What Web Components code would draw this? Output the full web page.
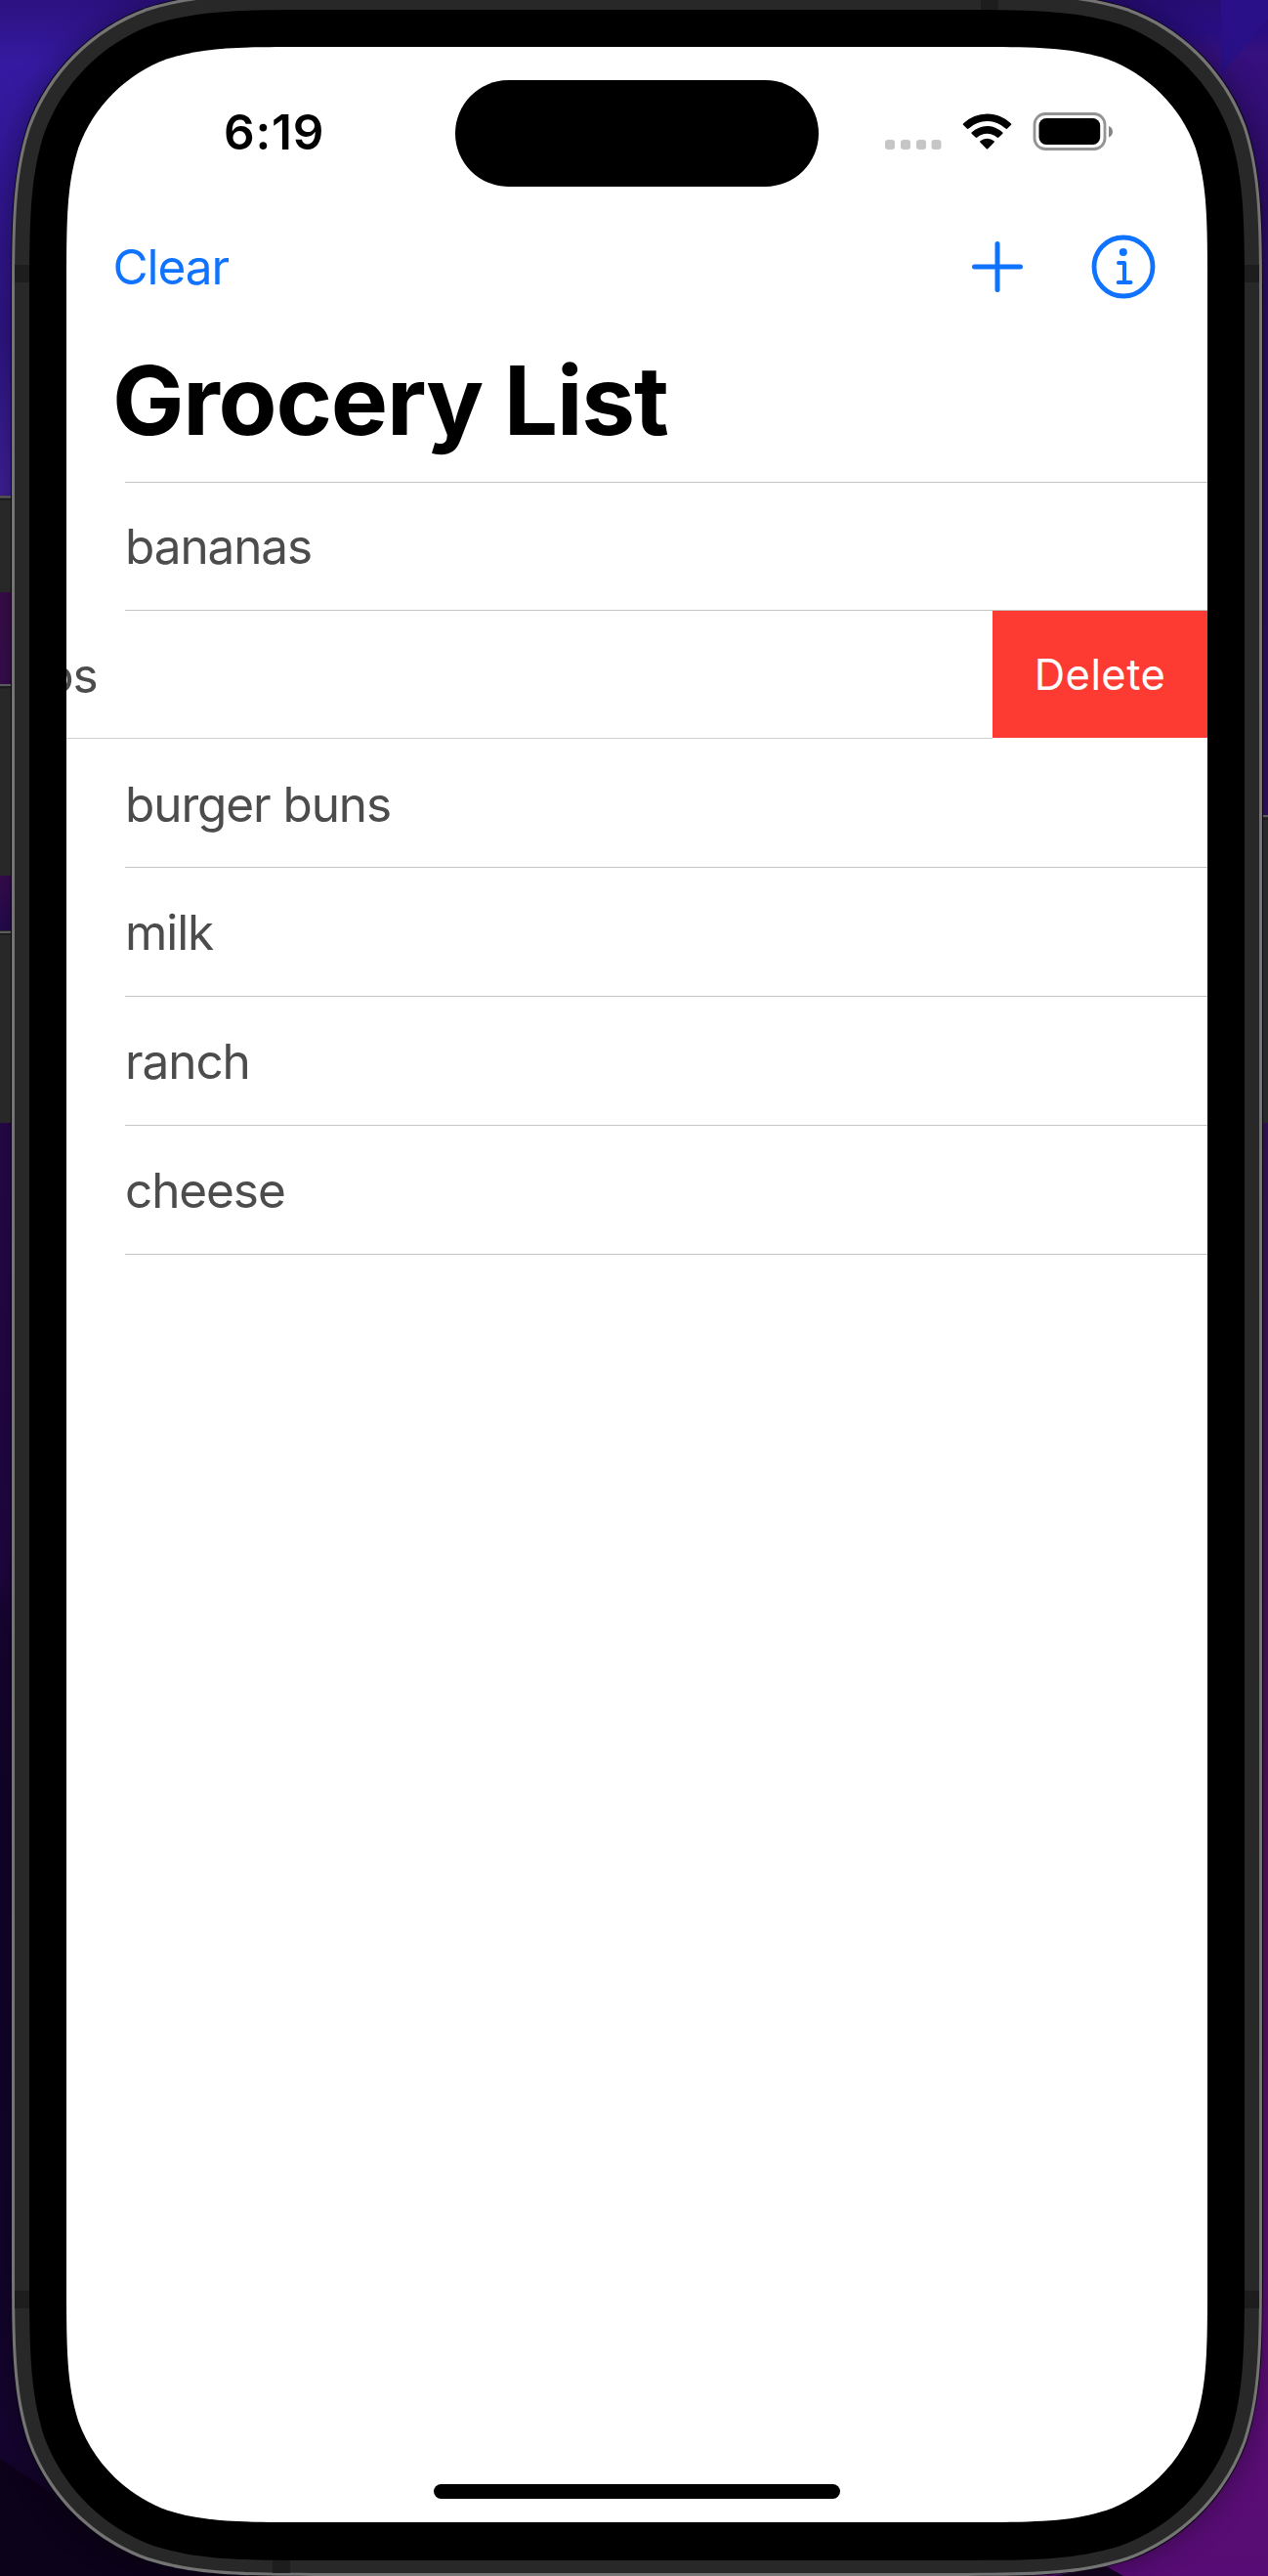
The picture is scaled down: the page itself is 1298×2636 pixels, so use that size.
<!DOCTYPE html>
<html lang="en">
<head>
<meta charset="utf-8">
<title>Grocery List</title>
<style>
html,body{margin:0;padding:0;width:1298px;height:2636px;overflow:hidden;background:#1c0745}
body{font-family:Inter,"Liberation Sans",sans-serif}
</style>
</head>
<body>
<phone-stage>
  <status-bar time="6:19"></status-bar>
  <nav-bar heading="Grocery List"><span slot="leading">Clear</span></nav-bar>
  <grocery-list>
    <grocery-row style="--h:131px;--pt:35px">bananas</grocery-row>
    <grocery-row swiped style="--h:131px;--pt:36px">os</grocery-row>
    <grocery-row after-swiped style="--h:132px;--pt:37px">burger buns</grocery-row>
    <grocery-row style="--h:132px">milk</grocery-row>
    <grocery-row style="--h:132px">ranch</grocery-row>
    <grocery-row last style="--h:133px">cheese</grocery-row>
  </grocery-list>
  <home-indicator></home-indicator>
</phone-stage>
<script>
// Rounded rectangle with continuous-curvature corners.
function smoothRect(x, y, w, h, r) {
  const a = 1.528665 * r, b = 1.08849296 * r, c = 0.86840694 * r, d = 0.63149379 * r,
        e = 0.07491139 * r, f = 0.37282383 * r, g = 0.16905956 * r;
  const R = x + w, B = y + h;
  return `M${x + a} ${y}L${R - a} ${y}` +
    `C${R - b} ${y} ${R - c} ${y} ${R - d} ${y + e}C${R - f} ${y + g} ${R - g} ${y + f} ${R - e} ${y + d}C${R} ${y + c} ${R} ${y + b} ${R} ${y + a}` +
    `L${R} ${B - a}` +
    `C${R} ${B - b} ${R} ${B - c} ${R - e} ${B - d}C${R - g} ${B - f} ${R - f} ${B - g} ${R - d} ${B - e}C${R - c} ${B} ${R - b} ${B} ${R - a} ${B}` +
    `L${x + a} ${B}` +
    `C${x + b} ${B} ${x + c} ${B} ${x + d} ${B - e}C${x + f} ${B - g} ${x + g} ${B - f} ${x + e} ${B - d}C${x} ${B - c} ${x} ${B - b} ${x} ${B - a}` +
    `L${x} ${y + a}` +
    `C${x} ${y + b} ${x} ${y + c} ${x + e} ${y + d}C${x + g} ${y + f} ${x + f} ${y + g} ${x + d} ${y + e}C${x + c} ${y} ${x + b} ${y} ${x + a} ${y}Z`;
}
class Base extends HTMLElement {
  constructor() { super(); this.attachShadow({ mode: 'open' }); }
  connectedCallback() { this.shadowRoot.innerHTML = this.render(); }
}
customElements.define('phone-stage', class extends Base {
  render() {
    const outer = smoothRect(12, -8, 1280, 2644, 218);
    return `<style>
      :host{display:block;position:relative;width:1298px;height:2636px;overflow:hidden}
      svg{position:absolute;inset:0;display:block}
      main{position:relative;display:flex;flex-direction:column;margin:0 62px 0 68px;top:48px;width:1168px;height:2533px;background:#fff;overflow:hidden;
        clip-path:path("${smoothRect(0, 0, 1168, 2533, 163.5)}")}
    </style>
    <svg width="1298" height="2636" viewBox="0 0 1298 2636">
      <defs>
        <linearGradient id="l" x1="0" y1="0" x2="0" y2="1">
          <stop offset="0" stop-color="#2c1180"/><stop offset=".025" stop-color="#351aa2"/><stop offset=".08" stop-color="#301690"/>
          <stop offset=".13" stop-color="#2f1585"/><stop offset=".19" stop-color="#3f209b"/><stop offset=".228" stop-color="#3b0d4c"/>
          <stop offset=".265" stop-color="#380e50"/><stop offset=".34" stop-color="#380c51"/><stop offset=".36" stop-color="#260a50"/>
          <stop offset=".44" stop-color="#27084c"/><stop offset=".61" stop-color="#200642"/><stop offset=".63" stop-color="#170433"/>
          <stop offset=".7" stop-color="#12032a"/><stop offset=".88" stop-color="#12042c"/><stop offset=".95" stop-color="#15042f"/>
          <stop offset="1" stop-color="#0c0219"/>
        </linearGradient>
        <linearGradient id="r" x1="0" y1="0" x2="0" y2="1">
          <stop offset="0" stop-color="#260d72"/><stop offset=".012" stop-color="#280e82"/><stop offset=".02" stop-color="#35107f"/>
          <stop offset=".08" stop-color="#2e0c68"/><stop offset=".2" stop-color="#300d68"/><stop offset=".3" stop-color="#321062"/>
          <stop offset=".44" stop-color="#36125f"/><stop offset=".58" stop-color="#45125e"/><stop offset=".75" stop-color="#5c0f62"/>
          <stop offset=".88" stop-color="#600f78"/><stop offset="1" stop-color="#560c74"/>
        </linearGradient>
        <filter id="s" x="-10%" y="-10%" width="120%" height="120%"><feGaussianBlur stdDeviation="16"/></filter>
      </defs>
      <rect width="649" height="2636" fill="url(#l)"/>
      <rect x="649" width="649" height="2636" fill="url(#r)"/>
      <path d="M0 2516L60 2556L180 2636H0Z" fill="#0c0219"/>
      <path d="M1298 20L1250 76V0H1298Z" fill="#2a1088"/>
      <path d="M1080 2636L1132 2626L1150 2636Z" fill="#13031f"/>
      <path d="${outer}" fill="#000" opacity=".4" filter="url(#s)"/>
      <g fill="#282828">
        <path d="M-4 507H14V606H-4ZM-4 700H14V896H-4ZM-4 952H14V1149H-4ZM1291 834H1302V1149H1291Z"/>
      </g>
      <path d="M0 508.500H12M0 701H12M0 954H12M1292 835H1298" stroke="#5a5a5f" stroke-width="2"/>
      <path d="M0 511H12M0 703.500H12M0 956H12M1292 838H1298" stroke="#1a1a1a" stroke-width="1.500"/>
      <path d="${outer}" fill="#747474" stroke="#0b0610" stroke-width="2"/>
      <path d="${smoothRect(12, -8, 1280, 2644, 218)}" fill="#747474"/>
      <path d="${smoothRect(15, -5, 1274, 2638, 215.500)}" fill="#282828"/>
      <path d="M1004 0H1022V12H1004ZM279 2618H297V2633H279ZM15 271H32V289H15ZM1272 271H1289V289H1272ZM15 2344H32V2362H15ZM1272 2344H1289V2362H1272Z" fill="#1d1d1d"/>
      <path d="${smoothRect(30, 10, 1244, 2610, 201)}" fill="#000"/>
    </svg>
    <main><slot></slot></main>`;
  }
});
customElements.define('status-bar', class extends Base {
  render() {
    return `<style>
      :host{display:grid;grid-template-columns:398px 372px 1fr;height:154px;flex:none}
      .time{padding:57px 0 0 161px;font-size:49.500px;line-height:60px;font-weight:600;letter-spacing:.8px;color:#000}
      .island{margin-top:33.500px;height:109px;border-radius:55px;background:#000}
      svg{display:block;width:240px;height:50px;margin:62px 0 0 66px}
    </style>
    <div class="time">${this.getAttribute('time')}</div>
    <div class="island"></div>
    <svg viewBox="904 110 240 50">
      <g fill="#c6c6c6"><rect x="906" y="143" width="10" height="10" rx="3"/><rect x="922" y="143" width="10" height="10" rx="3"/><rect x="938" y="143" width="10" height="10" rx="3"/><rect x="953.500" y="143" width="10" height="10" rx="3"/></g>
      <path d="M986.200 126.200Q985.300 127.200 986.200 128.100L989.800 131.600Q990.700 132.400 991.600 131.500A27.800 27.800 0 0 1 1029.400 131.500Q1030.300 132.400 1031.200 131.600L1034.800 128.100Q1035.700 127.200 1034.800 126.200A35.300 35.300 0 0 0 986.200 126.200Z
        M994.800 135.200Q994 136.100 994.800 136.900L998.600 140.500Q999.500 141.300 1000.400 140.500A15.500 15.500 0 0 1 1020.600 140.500Q1021.500 141.300 1022.400 140.500L1026.200 136.900Q1027 136.100 1026.200 135.200A23.200 23.200 0 0 0 994.800 135.200Z
        M1003.400 144.300Q1002.800 145 1003.500 145.800L1009.800 152.200Q1010.500 152.900 1011.200 152.200L1017.500 145.800Q1018.200 145 1017.600 144.300A10.800 10.800 0 0 0 1003.400 144.300Z" fill="#000"/>
      <rect x="1059" y="116.500" width="72" height="36" rx="11" fill="none" stroke="#949494" stroke-width="2.800"/>
      <rect x="1063.500" y="121" width="62.700" height="27" rx="7.500" fill="#000"/>
      <path d="M1135 129C1140.300 130.600 1140.300 138.900 1135 140.500Z" fill="#848484"/>
    </svg>`;
  }
});
customElements.define('nav-bar', class extends Base {
  render() {
    return `<style>
      :host{display:flex;flex-direction:column;height:291px;flex:none}
      .bar{display:flex;justify-content:space-between;padding:33px 53px 0 47.500px;color:#0f73ff;font-size:49.500px;line-height:60px;height:74px}
      .lead{margin-top:7.500px;letter-spacing:-1.100px}
      .tools{display:flex;gap:69px;align-items:center;height:76px}
      svg{display:block;fill:none;stroke:#0f73ff;stroke-linecap:round;stroke-linejoin:round}
      h1{margin:42px 0 0 47px;font-size:98px;line-height:118px;font-weight:700;letter-spacing:-1.250px;color:#000;white-space:nowrap}
    </style>
    <div class="bar">
      <div class="lead"><slot name="leading"></slot></div>
      <div class="tools">
        <svg width="54" height="54" viewBox="0 0 54 54" stroke-width="5"><path d="M27 3.500V50.500M3.500 27H50.500"/></svg>
        <svg width="66" height="66" viewBox="0 0 66 66" stroke-width="4.800"><circle cx="33" cy="33" r="30"/><path d="M28 29H34V49M27.700 49H40.500" stroke-width="4"/><circle cx="32.800" cy="18" r="4" fill="#0f73ff" stroke="none"/></svg>
      </div>
    </div>
    <h1>${this.getAttribute('heading')}</h1>`;
  }
});
customElements.define('grocery-list', class extends Base {
  render() { return `<style>:host{display:flex;flex-direction:column;flex:none}</style><slot></slot>`; }
});
customElements.define('grocery-row', class extends Base {
  render() {
    const swiped = this.hasAttribute('swiped'), after = this.hasAttribute('after-swiped'), last = this.hasAttribute('last');
    return `<style>
      :host{display:grid;grid-template-columns:100%;grid-template-rows:1px 1fr ${last ? '1px' : ''};height:var(--h);color:#4c4c4c;font-size:49.500px;line-height:60px;letter-spacing:-1.100px}
      .line{background:#c4c4c4;margin-left:${after ? 0 : 60}px}
      .after{background:#d0d0d0;margin-right:220px}
      .body{display:flex;align-items:stretch;min-height:0}
      .text{flex:1;min-width:0;padding:var(--pt,36px) 0 0 ${swiped ? 0 : 60}px;overflow:hidden;white-space:nowrap}
      .text span{display:inline-block;margin-left:${swiped ? '-22px' : '0'}}
      .del{flex:none;width:220px;background:#fe3b32;color:#fff;font-size:43.500px;letter-spacing:.450px;text-align:center;line-height:131px}
    </style>
    <div class="line ${after ? 'after' : ''}"></div>
    <div class="body"><div class="text"><span><slot></slot></span></div>${swiped ? '<div class="del">Delete</div>' : ''}</div>
    ${last ? '<div class="line"></div>' : ''}`;
  }
});
customElements.define('home-indicator', class extends Base {
  render() {
    return `<style>:host{display:flex;justify-content:center;margin-top:auto;padding-bottom:24px}
      div{width:416px;height:15px;border-radius:8px;background:#000}</style><div></div>`;
  }
});
</script>
</body>
</html>
